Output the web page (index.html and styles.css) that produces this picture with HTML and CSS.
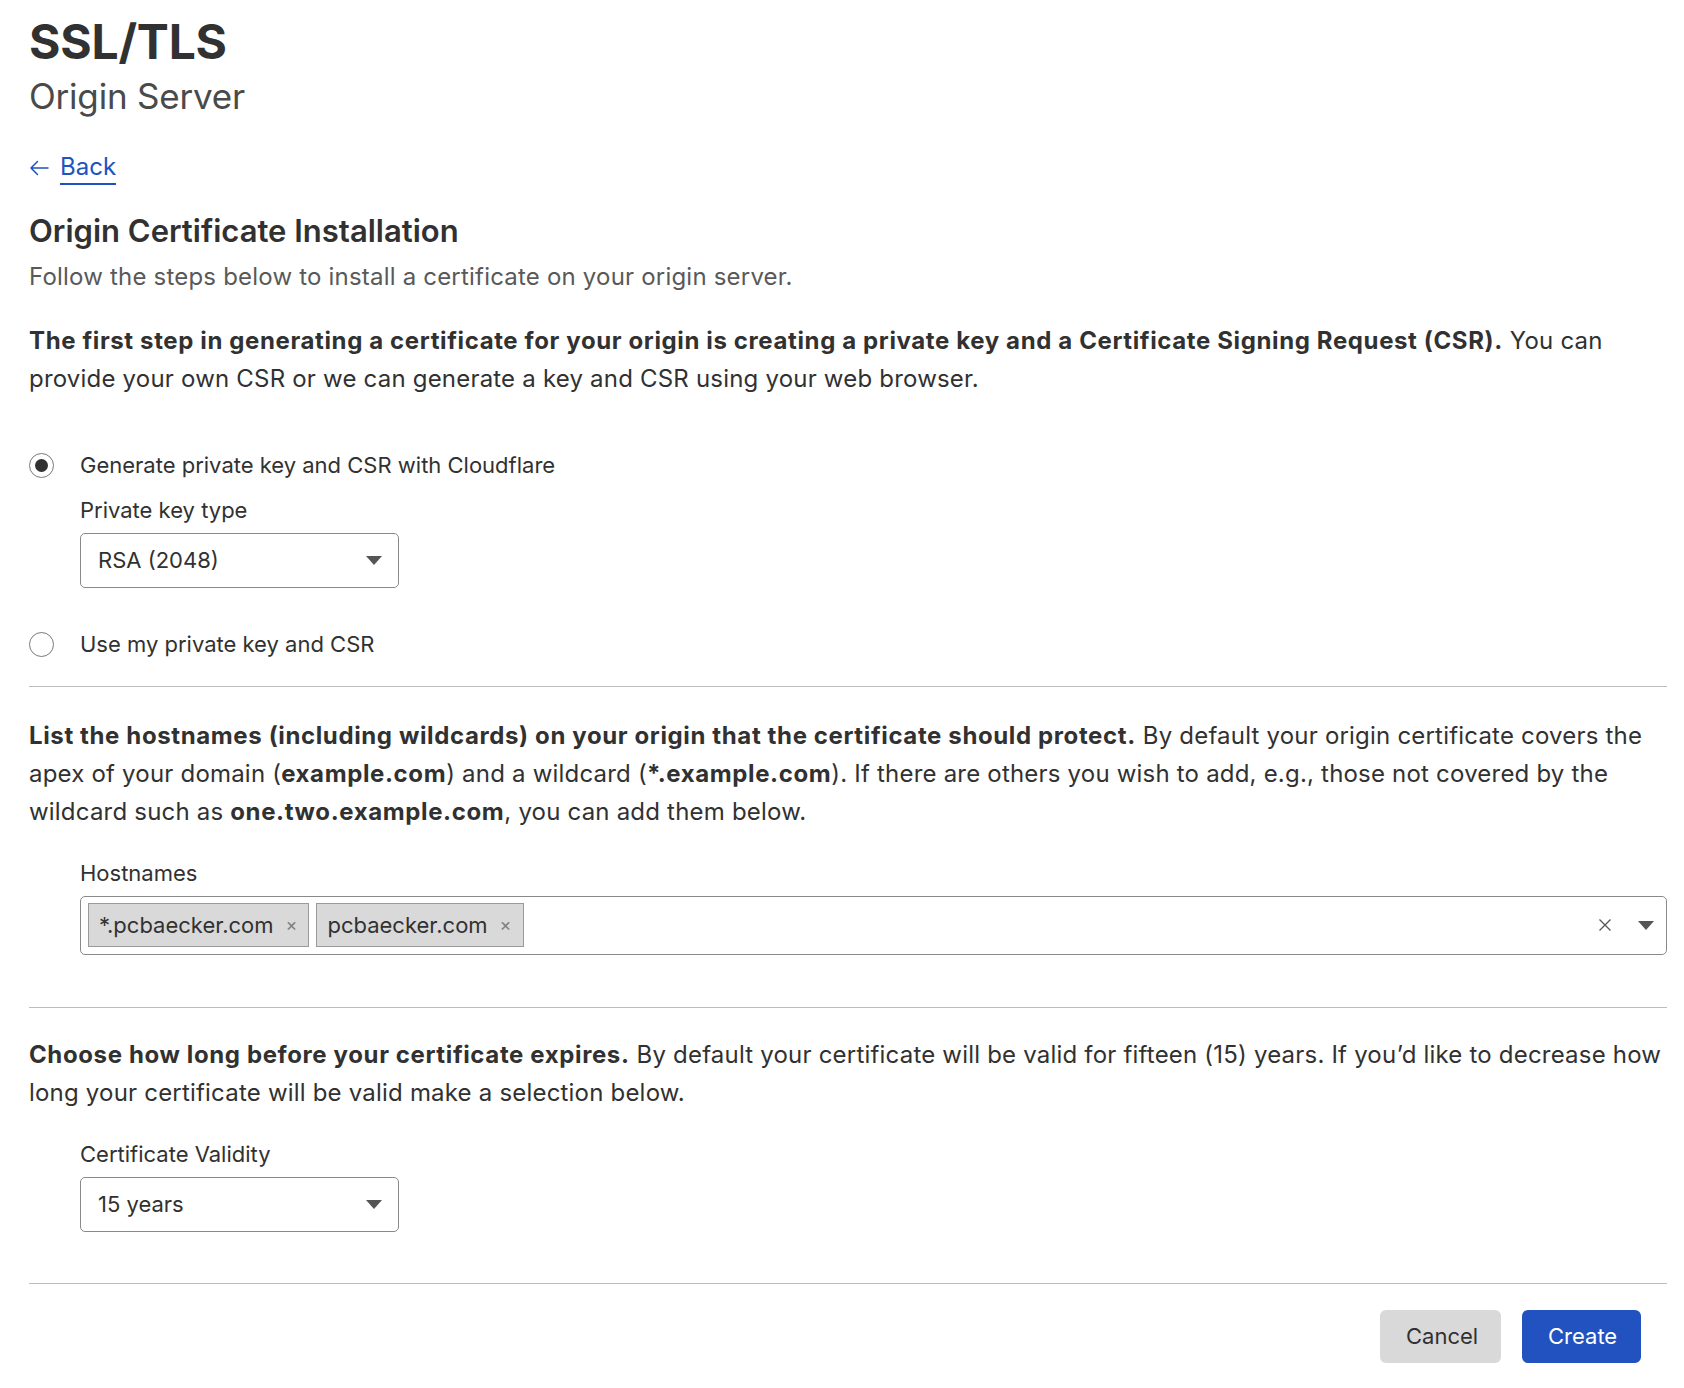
FILE: index.html
```html
<!DOCTYPE html>
<html lang="en">
<head>
<meta charset="utf-8">
<title>SSL/TLS - Origin Server</title>
<link rel="stylesheet" href="styles.css">
</head>
<body>
<main class="page">
  <header class="page-header">
    <h1 class="title">SSL/TLS</h1>
    <div class="subtitle">Origin Server</div>
  </header>

  <a class="back" href="#">
    <svg class="back-arrow" width="20" height="16" viewBox="0 0 20 16" aria-hidden="true">
      <path d="M19 8H2M8.5 1.5L2 8l6.5 6.5" fill="none" stroke="#2053c0" stroke-width="1.5" stroke-linecap="round" stroke-linejoin="round"/>
    </svg>
    <span class="back-text">Back</span>
  </a>

  <h2 class="section-title">Origin Certificate Installation</h2>
  <p class="lead">Follow the steps below to install a certificate on your origin server.</p>

  <section class="step">
    <p class="para first"><strong>The first step in generating a certificate for your origin is creating a private key and a Certificate Signing Request (CSR).</strong> You can<br>provide your own CSR or we can generate a key and CSR using your web browser.</p>

    <div class="options">
      <label class="radio-row">
        <span class="radio checked"></span>
        <span class="radio-label">Generate private key and CSR with Cloudflare</span>
      </label>
      <div class="field sub-field">
        <div class="field-label">Private key type</div>
        <div class="select">
          <span class="select-value">RSA (2048)</span>
          <span class="caret"></span>
        </div>
      </div>
      <label class="radio-row second">
        <span class="radio"></span>
        <span class="radio-label">Use my private key and CSR</span>
      </label>
    </div>
  </section>

  <hr class="divider">

  <section class="step">
    <p class="para"><strong>List the hostnames (including wildcards) on your origin that the certificate should protect.</strong> By default your origin certificate covers the<br>apex of your domain (<strong>example.com</strong>) and a wildcard (<strong>*.example.com</strong>). If there are others you wish to add, e.g., those not covered by the<br>wildcard such as <strong>one.two.example.com</strong>, you can add them below.</p>

    <div class="field indent">
      <div class="field-label">Hostnames</div>
      <div class="multi">
        <div class="tags">
          <span class="tag">*.pcbaecker.com<span class="tag-x">×</span></span>
          <span class="tag">pcbaecker.com<span class="tag-x">×</span></span>
        </div>
        <div class="multi-controls">
          <svg class="clear" width="14" height="14" viewBox="0 0 14 14" aria-hidden="true">
            <path d="M1.5 1.5l11 11M12.5 1.5l-11 11" stroke="#555" stroke-width="1.3" fill="none"/>
          </svg>
          <span class="caret"></span>
        </div>
      </div>
    </div>
  </section>

  <hr class="divider div2">

  <section class="step">
    <p class="para third"><strong>Choose how long before your certificate expires.</strong> By default your certificate will be valid for fifteen (15) years. If you’d like to decrease how<br>long your certificate will be valid make a selection below.</p>

    <div class="field indent validity">
      <div class="field-label">Certificate Validity</div>
      <div class="select">
        <span class="select-value">15 years</span>
        <span class="caret"></span>
      </div>
    </div>
  </section>

  <hr class="divider div3">

  <footer class="actions">
    <button class="btn btn-cancel" type="button">Cancel</button>
    <button class="btn btn-create" type="button">Create</button>
  </footer>
</main>
</body>
</html>
```

FILE: styles.css
```css
* { box-sizing: border-box; }

html, body {
  margin: 0;
  padding: 0;
  background: #ffffff;
}

body {
  font-family: Inter, "Noto Sans", "Liberation Sans", sans-serif;
  color: #313131;
  font-size: 24px;
  line-height: 38.4px;
}

.page {
  width: 1638px;
  margin-left: 29px;
  padding-top: 12px;
}

.page-header {
  display: flex;
  flex-direction: column;
}

.title {
  margin: 0;
  font-size: 48px;
  line-height: 60px;
  font-weight: 700;
  color: #313131;
  letter-spacing: -0.2px;
}

.subtitle {
  margin-top: 2px;
  font-size: 35px;
  line-height: 44px;
  font-weight: 400;
  color: #4a4a4a;
  letter-spacing: -0.2px;
}

.back {
  display: inline-flex;
  align-items: center;
  gap: 11px;
  margin-top: 33px;
  text-decoration: none;
  color: #2053c0;
  font-size: 24px;
  line-height: 36px;
}

.back-arrow { display: block; }

.back-text {
  border-bottom: 2px solid #2053c0;
  line-height: 32px;
}

.section-title {
  margin: 24px 0 0;
  font-size: 31px;
  line-height: 40px;
  font-weight: 600;
  color: #313131;
}

.lead {
  margin: 7px 0 0;
  font-size: 24px;
  line-height: 38.4px;
  color: #595959;
  letter-spacing: 0.2px;
}

.step { margin: 0; }

.para {
  margin: 30px 0 0;
  font-size: 24px;
  line-height: 38.4px;
  color: #313131;
  letter-spacing: 0.2px;
  white-space: nowrap;
}

.para.first { margin-top: 25px; }
.para.third { margin-top: 28px; }

.para strong {
  font-weight: 700;
  letter-spacing: 0.62px;
}

.options {
  margin-top: 48px;
  display: flex;
  flex-direction: column;
}

.radio-row {
  display: flex;
  align-items: center;
  gap: 26px;
  height: 38px;
  color: #313131;
}

.radio-row.second { margin-top: 38px; }

.radio {
  width: 25px;
  height: 25px;
  border: 1px solid #7a7a7a;
  border-radius: 50%;
  background: #fff;
  display: flex;
  align-items: center;
  justify-content: center;
  flex: none;
}

.radio.checked::after {
  content: "";
  width: 13px;
  height: 13px;
  border-radius: 50%;
  background: #313131;
}

.radio-label { font-size: 22px; }

.field {
  display: flex;
  flex-direction: column;
}

.sub-field { margin-left: 51px; margin-top: 8px; }

.indent { margin-left: 51px; }

.field-label {
  font-size: 22px;
  line-height: 34px;
  color: #313131;
  margin-bottom: 6px;
}

.select {
  width: 319px;
  height: 55px;
  border: 1px solid #8a8a8a;
  border-radius: 5px;
  display: flex;
  align-items: center;
  justify-content: space-between;
  padding: 0 16px 0 17px;
  font-size: 22px;
  color: #313131;
}

.caret {
  width: 0;
  height: 0;
  border-left: 8px solid transparent;
  border-right: 8px solid transparent;
  border-top: 9px solid #555555;
  display: block;
}

.divider {
  border: 0;
  border-top: 1px solid #bdbdbd;
  margin: 22px 0 0;
  height: 0;
}

.div2 { margin-top: 52px; }
.div3 { margin-top: 51px; }

.field.indent { margin-top: 24px; }

.multi {
  height: 59px;
  border: 1px solid #8a8a8a;
  border-radius: 5px;
  display: flex;
  align-items: center;
  justify-content: space-between;
  padding: 0 12px 0 7px;
}

.tags {
  display: flex;
  gap: 7px;
}

.tag {
  display: inline-flex;
  align-items: center;
  height: 44px;
  padding: 0 11px 0 10px;
  background: #d9d9d9;
  border: 1px solid #9a9a9a;
  font-size: 22px;
  color: #313131;
}

.tag-x {
  margin-left: 12px;
  font-size: 18px;
  color: #808080;
}

.multi-controls {
  display: flex;
  align-items: center;
  gap: 26px;
}

.clear { display: block; }

.validity { margin-top: 24px; }

.actions {
  display: flex;
  justify-content: flex-end;
  gap: 21px;
  padding-right: 26px;
  margin-top: 26px;
}

.btn {
  height: 53px;
  border: 0;
  border-radius: 6px;
  font-family: inherit;
  font-size: 22px;
  padding: 0 26px;
  cursor: pointer;
}

.btn-cancel {
  background: #d9d9d9;
  color: #313131;
  width: 121px;
}

.btn-create {
  background: #2152c0;
  color: #ffffff;
  width: 119px;
}
```
